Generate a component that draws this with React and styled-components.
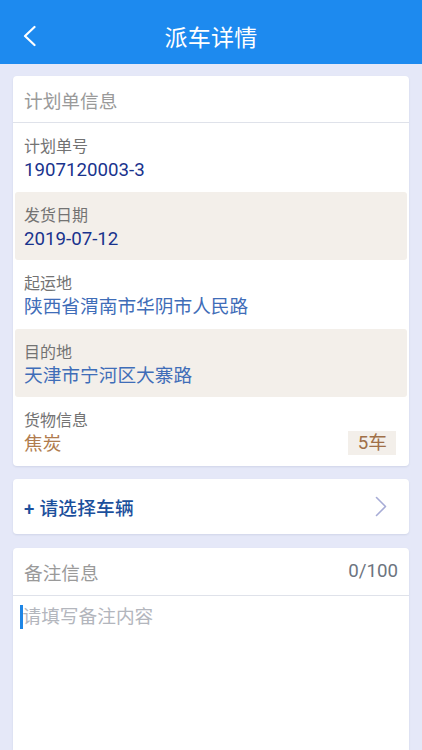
import React from "react";
import styled, { createGlobalStyle } from "styled-components";

const Global = createGlobalStyle`
  html, body { margin: 0; padding: 0; }
  body {
    background: #e5e8f8;
    font-family: Roboto, "Noto Sans CJK SC", "Noto Sans", sans-serif;
    -webkit-font-smoothing: antialiased;
  }
  * { box-sizing: border-box; }
`;

const Page = styled.div`
  display: flex;
  flex-direction: column;
  height: 750px;
  overflow: hidden;
  background: #e5e8f8;
`;

const TopBar = styled.header`
  flex: none;
  height: 64px;
  padding-top: 8px;
  background: #1d8aef;
  display: grid;
  grid-template-columns: 60px 1fr 60px;
  align-items: center;
`;

const BackButton = styled.button`
  border: 0;
  background: none;
  padding: 0 0 0 22px;
  height: 56px;
  display: flex;
  align-items: center;
  cursor: pointer;
`;

const Title = styled.h1`
  margin: 0;
  text-align: center;
  color: #ffffff;
  font-size: 23px;
  font-weight: 400;
  letter-spacing: 0.3px;
`;

const Content = styled.main`
  flex: 1;
  display: flex;
  flex-direction: column;
  gap: 13.5px;
  padding: 12px 13px 0;
  min-height: 0;
`;

const Card = styled.section`
  background: #ffffff;
  border-radius: 4px;
  box-shadow: 0 1px 2px rgba(60, 70, 120, 0.12);
  display: flex;
  flex-direction: column;
  flex: ${(p) => (p.$grow ? "1" : "none")};
  ${(p) => (p.$grow ? "border-bottom-left-radius: 0; border-bottom-right-radius: 0;" : "")}
`;

const CardHead = styled.div`
  height: ${(p) => (p.$tall ? "48px" : "47px")};
  display: flex;
  align-items: center;
  justify-content: space-between;
  padding: 0 11px 0 11px;
  border-bottom: 1px solid #dfe2ea;
  font-size: 18.7px;
  color: #9a9a9a;
`;

const Counter = styled.span`
  color: #6d7480;
  font-size: 18.7px;
`;

const Rows = styled.div`
  display: flex;
  flex-direction: column;
  padding: 0 2px;
`;

const Row = styled.div`
  height: 68.6px;
  padding: 13px 11px 0 9px;
  border-radius: 3px;
  background: ${(p) => (p.$shaded ? "#f3efea" : "transparent")};
`;

const Label = styled.div`
  font-size: 16px;
  line-height: 22px;
  color: #737373;
`;

const ValueLine = styled.div`
  display: flex;
  align-items: center;
  justify-content: space-between;
  height: 24px;
`;

const Value = styled.span`
  font-size: 18.7px;
  line-height: 24px;
  color: ${(p) => p.$color};
`;

const Badge = styled.span`
  background: #f3efea;
  color: #a06f48;
  font-size: 18.7px;
  height: 24px;
  line-height: 24px;
  padding: 0 9px 0 10px;
  margin-top: -2px;
`;

const PickRow = styled.button`
  height: 55px;
  border: 0;
  background: none;
  display: flex;
  align-items: center;
  justify-content: space-between;
  padding: 0 22px 0 11px;
  font-family: inherit;
  cursor: pointer;
`;

const PickText = styled.span`
  font-size: 18.7px;
  color: #1b4f9c;
  font-weight: 500;
  letter-spacing: 0.2px;
`;

const NoteArea = styled.div`
  flex: 1;
  padding: 9px 7px 0;
`;

const Placeholder = styled.div`
  display: flex;
  align-items: center;
  font-size: 18.7px;
  line-height: 24px;
  color: #b3b6bd;
`;

const Caret = styled.span`
  width: 2.5px;
  height: 24px;
  background: #1e86e6;
  flex: none;
`;

const rows = [
  { label: "计划单号", value: "1907120003-3", color: "#19338d" },
  { label: "发货日期", value: "2019-07-12", color: "#19338d", shaded: true },
  { label: "起运地", value: "陕西省渭南市华阴市人民路", color: "#3f6db8" },
  { label: "目的地", value: "天津市宁河区大寨路", color: "#3f6db8", shaded: true },
];

export default function App() {
  return (
    <>
      <Global />
      <Page>
        <TopBar>
          <BackButton aria-label="back">
            <svg width="14" height="22" viewBox="0 0 14 22">
              <path d="M12.5 2 L3 11 L12.5 20" fill="none" stroke="#fff" strokeWidth="2.2" strokeLinecap="round" strokeLinejoin="round" />
            </svg>
          </BackButton>
          <Title>派车详情</Title>
          <span />
        </TopBar>
        <Content>
          <Card>
            <CardHead>计划单信息</CardHead>
            <Rows>
              {rows.map((r) => (
                <Row key={r.label} $shaded={r.shaded}>
                  <Label>{r.label}</Label>
                  <ValueLine>
                    <Value $color={r.color}>{r.value}</Value>
                  </ValueLine>
                </Row>
              ))}
              <Row>
                <Label>货物信息</Label>
                <ValueLine>
                  <Value $color="#b07c4e">焦炭</Value>
                  <Badge>5车</Badge>
                </ValueLine>
              </Row>
            </Rows>
          </Card>
          <Card>
            <PickRow>
              <PickText>+ 请选择车辆</PickText>
              <svg width="12" height="21" viewBox="0 0 12 21">
                <path d="M1.5 1.5 L10.5 10.5 L1.5 19.5" fill="none" stroke="#a7acd6" strokeWidth="1.6" strokeLinecap="round" strokeLinejoin="round" />
              </svg>
            </PickRow>
          </Card>
          <Card $grow>
            <CardHead $tall>
              <span>备注信息</span>
              <Counter>0/100</Counter>
            </CardHead>
            <NoteArea>
              <Placeholder>
                <Caret />
                请填写备注内容
              </Placeholder>
            </NoteArea>
          </Card>
        </Content>
      </Page>
    </>
  );
}
